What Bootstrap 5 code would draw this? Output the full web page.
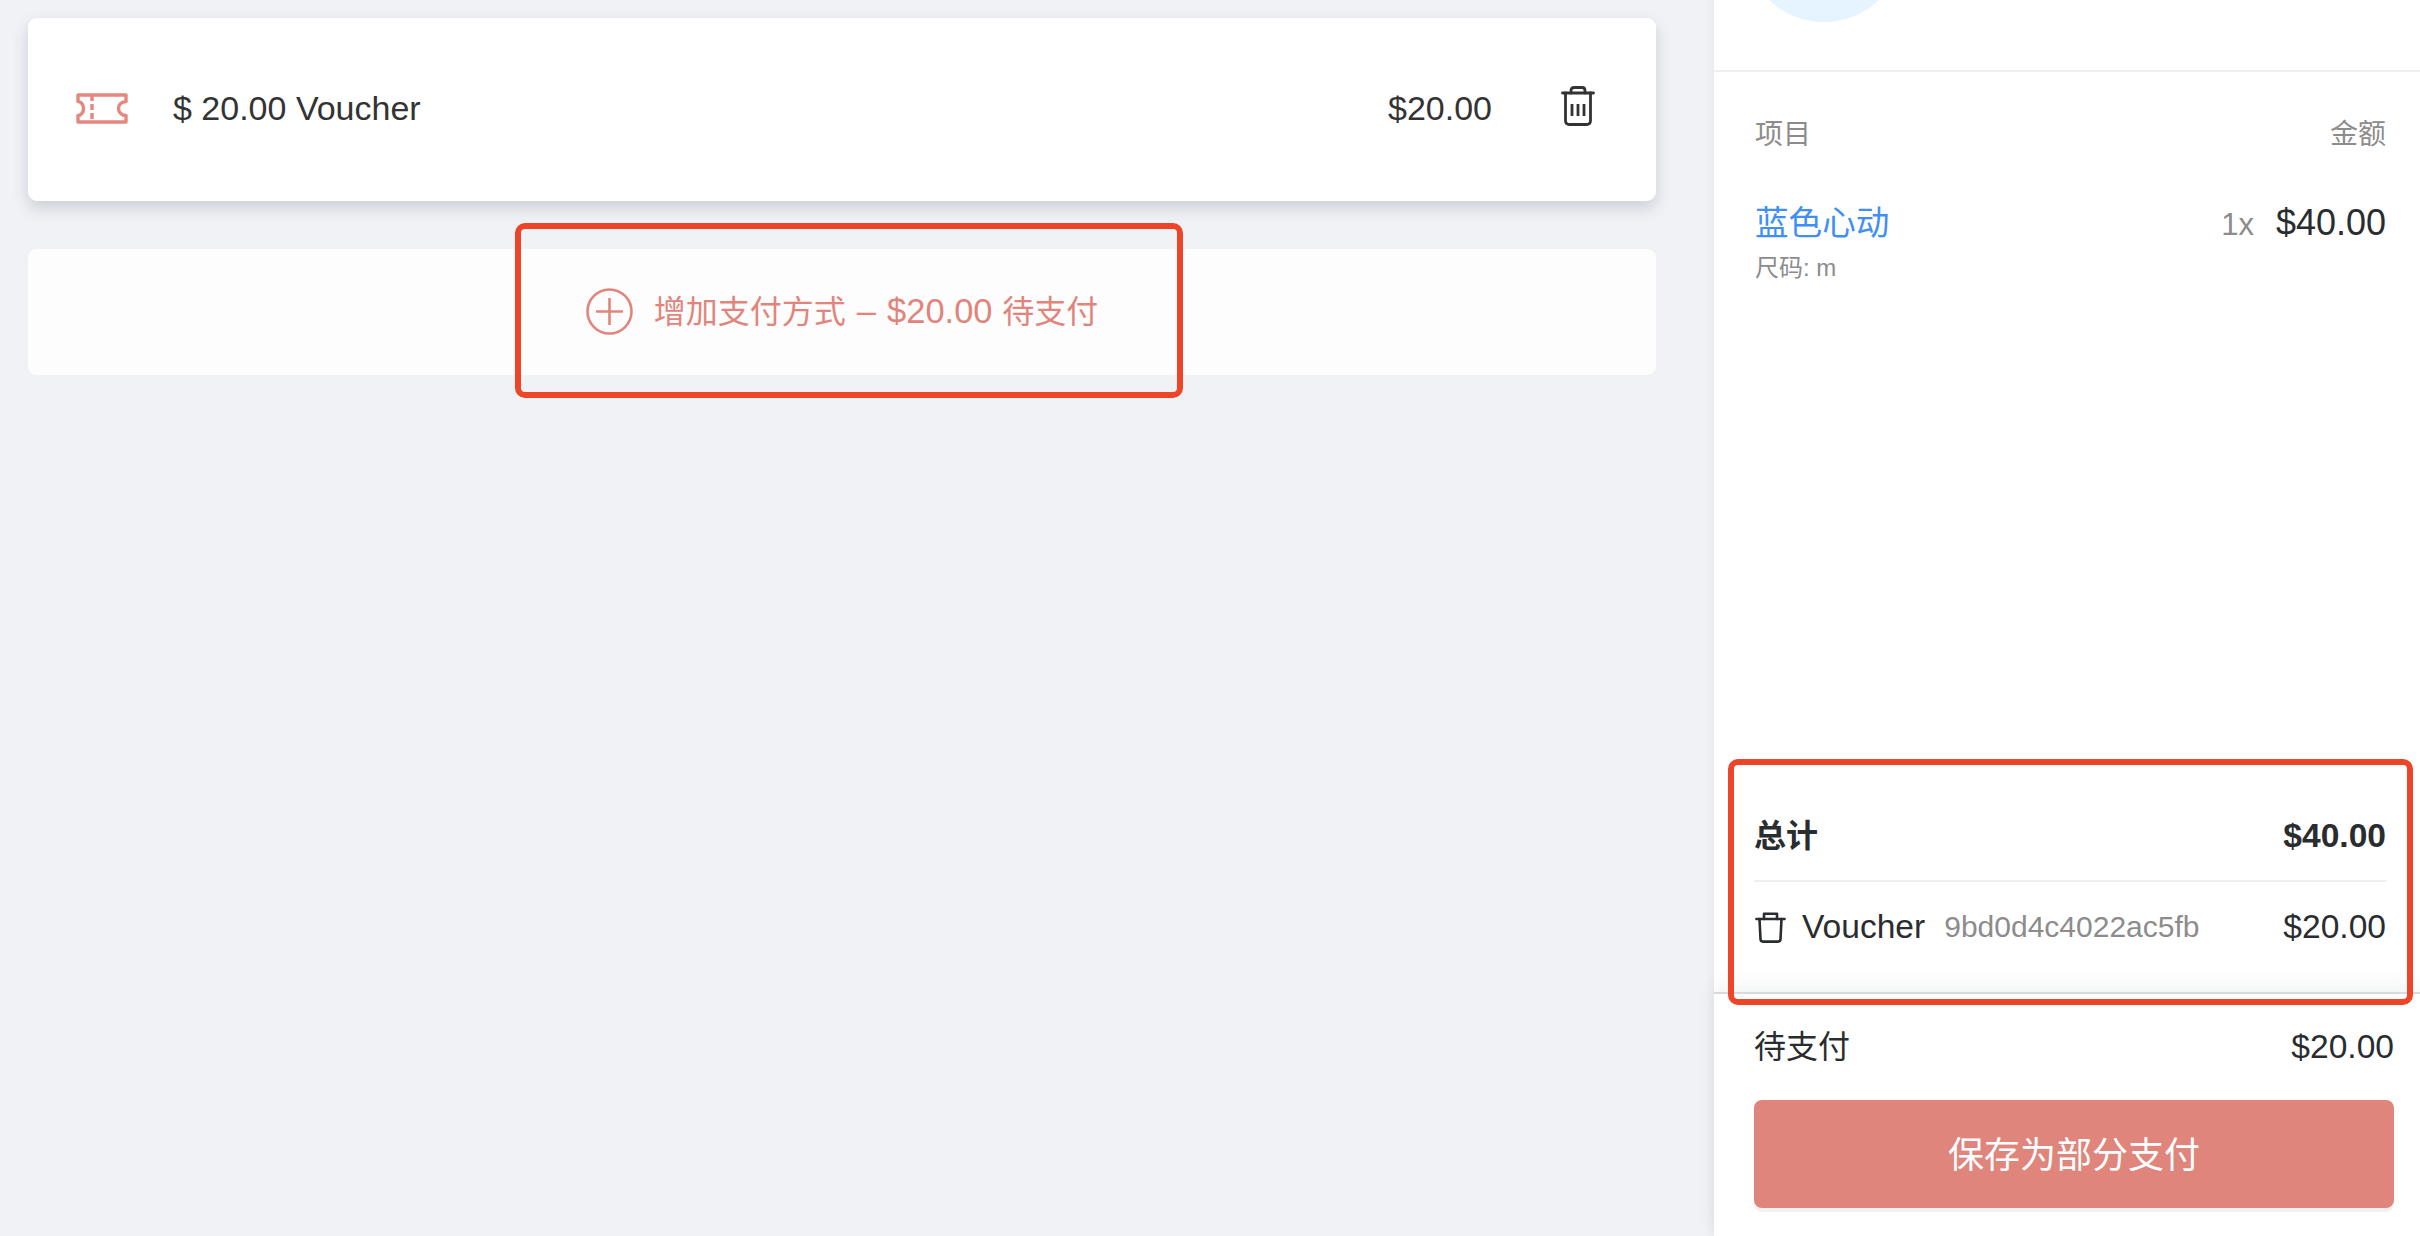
<!DOCTYPE html>
<html lang="zh">
<head>
<meta charset="utf-8">
<title>支付</title>
<link rel="stylesheet" href="https://cdn.jsdelivr.net/npm/bootstrap@5.3.0/dist/css/bootstrap.min.css">
<style>
html,body{height:100%}
body{background:#f0f2f6;font-family:"Liberation Sans","Noto Sans CJK SC",sans-serif;font-size:33.6px;line-height:40px;color:#2a2d30;overflow:hidden;position:relative}
.pay-shell{height:1236px}
.pay-main{width:1714px;padding:18px 58px 0 28px}
.tender-card{height:183px;border:0;border-radius:9px;background:#fff;padding:0 61px 3px 48px;color:#333;font-size:34px;box-shadow:0 7px 16px rgba(60,65,80,.2)}
.tender-label{margin-left:45px}
.tender-del{margin-left:69px;margin-bottom:4px;line-height:0}
.add-card{height:126px;margin-top:48px;padding-bottom:2px;border-radius:9px;background:#fdfdfd;color:#e1857c;font-size:34.5px}
.add-text{margin-left:21px}
.han-tight{font-size:32px}
.dash-gap{margin:0 11px}
.side-panel{width:706px;background:#fff;box-shadow:-2px 0 8px rgba(60,65,80,.06)}
.side-head{height:72px;border-bottom:2px solid #eee;padding-left:30px}
.avatar-disc{width:160px;height:160px;border-radius:50%;background:#e6f4ff;margin-top:-138px}
.side-body{padding:43px 34px 0 41px}
.col-title{font-size:28px;color:#8c8c8c}
.item-row{margin-top:49px}
.item-name{color:#3f8ff7}
.item-amount{margin-top:-1px}
.item-qty{color:#8c8c8c;margin-right:22px;font-size:31px}
.item-price{font-size:36px}
.item-sub{font-size:24px;line-height:32px;color:#8c8c8c;margin-top:7px}
.sum-block{padding:1px 34px 45px 41px}
.sum-total{font-weight:700;padding-bottom:24px;border-bottom:2px solid #eee;margin-left:-1px}
.sum-line{padding-top:25px}
.sum-trash{line-height:0;margin-right:16px}
.sum-code{font-size:30px;color:#8c8c8c;margin-left:19px}
.pay-foot{height:244px;padding:33px 26px 0 40px;border-top:2px solid #d9d9dd;box-shadow:0 -6px 18px rgba(60,65,80,.07);background:#fff}
.save-btn{display:block;width:100%;height:108px;margin-top:33px;border:0;border-radius:8px;background:#df857b;color:#fff;font-size:36px;line-height:108px;padding:2px 0 0;box-shadow:0 4px 0 #f1f1f2}
.mark-box{position:absolute;border:6px solid #ee4528;border-radius:10px;pointer-events:none}
.mark-a{left:515px;top:223px;width:668px;height:175px}
.mark-b{left:1728px;top:759px;width:685px;height:246px}
</style>
</head>
<body>
<div class="pay-shell d-flex">
  <main class="pay-main flex-shrink-0">
    <div class="card tender-card flex-row align-items-center">
      <svg width="52" height="31" viewBox="0 0 52 31" fill="none" stroke="#e5877e" stroke-width="3.4" aria-hidden="true">
        <path d="M2 2H50V8.5A7.5 7 0 0 0 50 22.5V29H2V22.5A5.5 7 0 0 0 2 8.5Z" stroke-linejoin="round"/>
        <path d="M16 2V29" stroke-dasharray="6 3 6 3 6 3"/>
      </svg>
      <span class="tender-label flex-grow-1">$ 20.00 Voucher</span>
      <span>$20.00</span>
      <span class="tender-del">
        <svg width="34" height="40" viewBox="0 0 34 40" fill="none" stroke="#333" stroke-width="2.8" stroke-linecap="round" stroke-linejoin="round" aria-hidden="true">
          <path d="M1.5 7H32.5"/>
          <path d="M10 7V4.5Q10 1.5 13 1.5H21Q24 1.5 24 4.5V7"/>
          <path d="M4.5 7V34.5Q4.5 38.5 8.5 38.5H25.5Q29.5 38.5 29.5 34.5V7"/>
          <path d="M11 18V30M17 18V30M23 18V30" stroke-linecap="butt"/>
        </svg>
      </span>
    </div>
    <div class="add-card d-flex align-items-center justify-content-center">
      <svg width="47" height="47" viewBox="0 0 47 47" fill="none" stroke="#e1857c" stroke-width="2.6" aria-hidden="true">
        <circle cx="23.5" cy="23.5" r="22"/>
        <path d="M23.5 10V37M10 23.5H37"/>
      </svg>
      <span class="add-text"><span class="han-tight">增加支付方式</span><span class="dash-gap">–</span>$20.00 <span class="han-tight">待支付</span></span>
    </div>
  </main>
  <aside class="side-panel d-flex flex-column flex-grow-1">
    <div class="side-head overflow-hidden flex-shrink-0">
      <div class="avatar-disc"></div>
    </div>
    <div class="side-body flex-grow-1">
      <div class="d-flex justify-content-between col-title"><span>项目</span><span>金额</span></div>
      <div class="item-row d-flex justify-content-between">
        <span class="item-name">蓝色心动</span>
        <span class="item-amount"><span class="item-qty">1x</span><span class="item-price">$40.00</span></span>
      </div>
      <div class="item-sub">尺码: m</div>
    </div>
    <div class="sum-block">
      <div class="sum-total d-flex justify-content-between"><span class="han-tight">总计</span><span>$40.00</span></div>
      <div class="sum-line d-flex align-items-center">
        <span class="sum-trash">
          <svg width="31" height="31" viewBox="0 0 31 31" fill="none" stroke="#2a2d30" stroke-width="2.6" stroke-linecap="round" stroke-linejoin="round" aria-hidden="true">
            <path d="M1.5 7H29.5"/>
            <path d="M9 7V1.8H22V7"/>
            <path d="M4.5 7L5.5 27Q5.6 29.6 8 29.6H23Q25.4 29.6 25.5 27L26.5 7"/>
          </svg>
        </span>
        <span>Voucher</span>
        <span class="sum-code flex-grow-1">9bd0d4c4022ac5fb</span>
        <span>$20.00</span>
      </div>
    </div>
    <div class="pay-foot flex-shrink-0">
      <div class="d-flex justify-content-between"><span class="han-tight">待支付</span><span>$20.00</span></div>
      <button type="button" class="btn save-btn">保存为部分支付</button>
    </div>
  </aside>
</div>
<div class="mark-box mark-a"></div>
<div class="mark-box mark-b"></div>
<script src="https://cdn.jsdelivr.net/npm/bootstrap@5.3.0/dist/js/bootstrap.bundle.min.js"></script>
</body>
</html>
